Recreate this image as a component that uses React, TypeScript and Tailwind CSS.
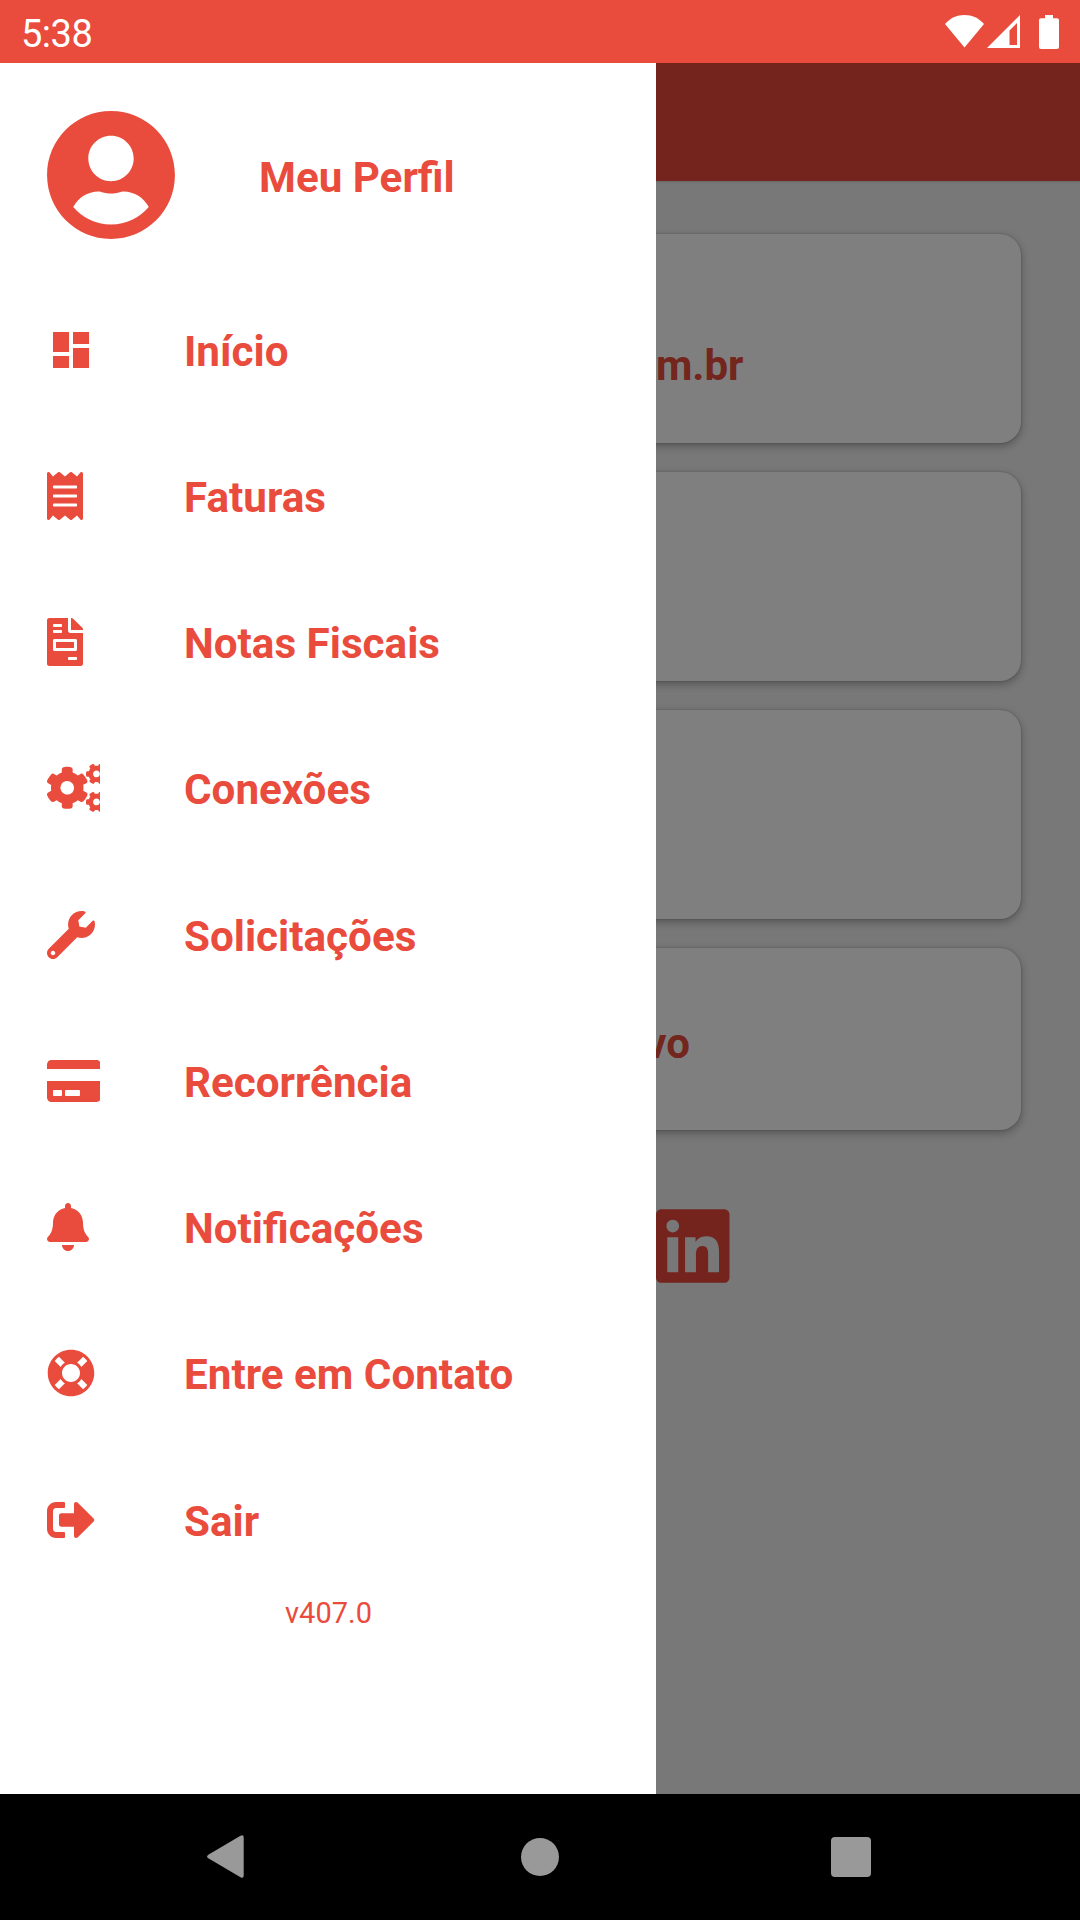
import React from "react";
import {
  FaBell,
  FaCogs,
  FaCreditCard,
  FaFileInvoice,
  FaLifeRing,
  FaLinkedin,
  FaReceipt,
  FaSignOutAlt,
  FaUserCircle,
  FaWrench,
} from "react-icons/fa";
import { MdDashboard } from "react-icons/md";
import type { IconType } from "react-icons";

type MenuItem = { label: string; Icon: IconType; iconClass: string };

const MENU: MenuItem[] = [
  { label: "Início", Icon: MdDashboard, iconClass: "w-[48px]" },
  { label: "Faturas", Icon: FaReceipt, iconClass: "w-[36px]" },
  { label: "Notas Fiscais", Icon: FaFileInvoice, iconClass: "w-[36px]" },
  { label: "Conexões", Icon: FaCogs, iconClass: "w-[60px]" },
  { label: "Solicitações", Icon: FaWrench, iconClass: "w-[48px]" },
  { label: "Recorrência", Icon: FaCreditCard, iconClass: "w-[54px]" },
  { label: "Notificações", Icon: FaBell, iconClass: "w-[42px]" },
  { label: "Entre em Contato", Icon: FaLifeRing, iconClass: "w-[48px]" },
  { label: "Sair", Icon: FaSignOutAlt, iconClass: "w-[48px]" },
];

function StatusBar() {
  return (
    <header className="flex h-[63px] shrink-0 items-center justify-between bg-[#e94c3d] px-[21px] text-white">
      <span className="pt-[5px] text-[38px] leading-none tracking-[-0.5px]">5:38</span>
      <div className="flex h-[34px] items-start">
        <svg className="h-[34px] w-[39px]" viewBox="0 0 39 34" fill="currentColor">
          <path d="M19.5 32.5 0 9C5 3.200 12 0 19.500 0S34 3.200 39 9z" />
        </svg>
        <svg className="ml-[3px] h-[34px] w-[33px]" viewBox="0 0 33 34" fill="currentColor">
          <path fillRule="evenodd" d="M33 0v33H0zM30 8l-7.500 7.500V30H30z" />
        </svg>
        <svg className="ml-[19px] h-[34px] w-[20px]" viewBox="0 0 20 34" fill="currentColor">
          <path d="M6 0h8v3.300h4q2 0 2 2V32q0 2-2 2H2q-2 0-2-2V5.300q0-2 2-2h4z" />
        </svg>
      </div>
    </header>
  );
}

function Card({ className, children }: { className: string; children?: React.ReactNode }) {
  return (
    <div
      className={
        "flex w-full justify-end rounded-[21px] bg-white text-[42px] font-bold leading-none text-[#e74c3c] shadow-[0_3px_9px_rgba(0,0,0,0.3),0_0_2px_rgba(0,0,0,0.25)] " +
        className
      }
    >
      {children}
    </div>
  );
}

function HomeScreen() {
  return (
    <main className="flex h-full flex-col bg-[#f0f0f0]">
      <div className="h-[118px] shrink-0 bg-[#e8483b] shadow-[0_1px_2px_rgba(0,0,0,0.15)]" />
      <div className="flex flex-col gap-[29px] px-[59px] pt-[53px]">
        <Card className="h-[209px] pr-[277.5px] pt-[111px]">m.br</Card>
        <Card className="h-[209px]" />
        <Card className="h-[209px]" />
        <Card className="h-[182px] pr-[331px] pt-[75px]">vo</Card>
      </div>
      <div className="flex justify-end pr-[350.5px] pt-[73.5px]">
        <FaLinkedin className="h-[84px] w-[73.5px] text-[#e8483b]" />
      </div>
    </main>
  );
}

function Drawer() {
  return (
    <aside className="absolute left-0 top-0 flex h-full w-[656px] flex-col bg-white text-[#e94c3d]">
      <div className="flex h-[224px] shrink-0 items-center pl-[47px]">
        <FaUserCircle className="h-[132px] w-[128px]" />
        <span className="ml-[84px] pt-[6px] text-[42.15px] font-bold leading-none">Meu Perfil</span>
      </div>
      <nav className="-mt-[10px] flex flex-col">
        {MENU.map(({ label, Icon, iconClass }) => (
          <a key={label} className="flex h-[146.25px] items-center pl-[47px]">
            <span className="mb-px flex w-[53px] shrink-0 overflow-hidden">
              <Icon className={"h-[48px] shrink-0 " + iconClass} />
            </span>
            <span className="ml-[84px] pt-[3px] text-[42.2px] font-bold leading-none">{label}</span>
          </a>
        ))}
      </nav>
      <p className="pl-[1px] text-center text-[29px] leading-[40px]">v407.0</p>
    </aside>
  );
}

function NavigationBar() {
  return (
    <footer className="flex h-[126px] shrink-0 items-center justify-between bg-black pb-px pl-[206px] pr-[209px] text-[#999999]">
      <svg className="h-[43px] w-[38px]" viewBox="0 0 38 43" fill="currentColor">
        <path d="M2.300 19.700 34.500.8q3.200-1.500 3.200 1.500v38.400q0 3-3.200 1.500L2.300 23.300q-2.500-1.800 0-3.600z" />
      </svg>
      <span className="ml-[4px] size-[38px] rounded-full bg-[#999999]" />
      <span className="size-[40px] rounded-[4px] bg-[#999999]" />
    </footer>
  );
}

export default function App() {
  return (
    <div className="flex h-[1920px] w-[1080px] flex-col overflow-hidden font-['Roboto',sans-serif]">
      <StatusBar />
      <div className="relative h-[1731px] shrink-0 overflow-hidden">
        <HomeScreen />
        <div className="absolute inset-0 bg-black/50" />
        <Drawer />
      </div>
      <NavigationBar />
    </div>
  );
}
